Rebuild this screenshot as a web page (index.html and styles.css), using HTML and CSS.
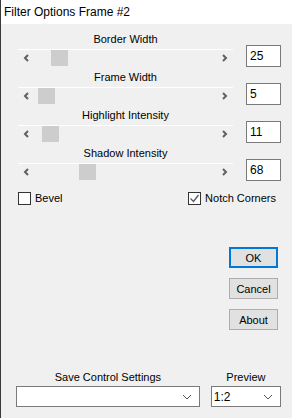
FILE: index.html
```html
<!DOCTYPE html>
<html lang="en">
<head>
    <meta charset="UTF-8">
    <meta name="viewport" content="width=device-width, initial-scale=1.0">
    <title>Filter Options Frame #2</title>
    <link rel="stylesheet" href="styles.css">
</head>
<body>

<div class="title">Filter Options Frame #2</div>

<div class="dialog">
    <div class="slider-row">
        <div class="slider">
            <div class="slider-label">Border Width</div>
            <div class="track">
                <span class="arrow"><svg width="16" height="16" viewBox="0 0 16 16"><path d="M10 5 L7 8 L10 11" fill="none" stroke="#606060" stroke-width="2"/></svg></span>
                <div class="thumb-area"><span class="thumb" style="margin-left: 17px"></span></div>
                <span class="arrow"><svg width="16" height="16" viewBox="0 0 16 16"><path d="M6 5 L9 8 L6 11" fill="none" stroke="#606060" stroke-width="2"/></svg></span>
            </div>
        </div>
        <div class="value">25</div>
    </div>

    <div class="slider-row">
        <div class="slider">
            <div class="slider-label">Frame Width</div>
            <div class="track">
                <span class="arrow"><svg width="16" height="16" viewBox="0 0 16 16"><path d="M10 5 L7 8 L10 11" fill="none" stroke="#606060" stroke-width="2"/></svg></span>
                <div class="thumb-area"><span class="thumb" style="margin-left: 4px"></span></div>
                <span class="arrow"><svg width="16" height="16" viewBox="0 0 16 16"><path d="M6 5 L9 8 L6 11" fill="none" stroke="#606060" stroke-width="2"/></svg></span>
            </div>
        </div>
        <div class="value">5</div>
    </div>

    <div class="slider-row">
        <div class="slider">
            <div class="slider-label">Highlight Intensity</div>
            <div class="track">
                <span class="arrow"><svg width="16" height="16" viewBox="0 0 16 16"><path d="M10 5 L7 8 L10 11" fill="none" stroke="#606060" stroke-width="2"/></svg></span>
                <div class="thumb-area"><span class="thumb" style="margin-left: 8px"></span></div>
                <span class="arrow"><svg width="16" height="16" viewBox="0 0 16 16"><path d="M6 5 L9 8 L6 11" fill="none" stroke="#606060" stroke-width="2"/></svg></span>
            </div>
        </div>
        <div class="value">11</div>
    </div>

    <div class="slider-row">
        <div class="slider">
            <div class="slider-label">Shadow Intensity</div>
            <div class="track">
                <span class="arrow"><svg width="16" height="16" viewBox="0 0 16 16"><path d="M10 5 L7 8 L10 11" fill="none" stroke="#606060" stroke-width="2"/></svg></span>
                <div class="thumb-area"><span class="thumb" style="margin-left: 45px"></span></div>
                <span class="arrow"><svg width="16" height="16" viewBox="0 0 16 16"><path d="M6 5 L9 8 L6 11" fill="none" stroke="#606060" stroke-width="2"/></svg></span>
            </div>
        </div>
        <div class="value">68</div>
    </div>

    <div class="checks">
        <label class="check">
            <span class="box"></span>
            <span>Bevel</span>
        </label>
        <label class="check">
            <span class="box"><svg width="11" height="11" viewBox="0 0 11 11"><path d="M1.5 5.5 L4.5 8.5 L9.5 2" fill="none" stroke="#5a5a5a" stroke-width="1.3"/></svg></span>
            <span>Notch Corners</span>
        </label>
    </div>

    <div class="buttons">
        <button class="default">OK</button>
        <button>Cancel</button>
        <button>About</button>
    </div>

    <div class="bottom">
        <div class="group save">
            <div class="group-label">Save Control Settings</div>
            <div class="combo">
                <span class="combo-text"></span>
                <svg width="10" height="6" viewBox="0 0 10 6"><path d="M1 1 L5 5 L9 1" fill="none" stroke="#555" stroke-width="1"/></svg>
            </div>
        </div>
        <div class="group preview">
            <div class="group-label">Preview</div>
            <div class="combo">
                <span class="combo-text">1:2</span>
                <svg width="10" height="6" viewBox="0 0 10 6"><path d="M1 1 L5 5 L9 1" fill="none" stroke="#555" stroke-width="1"/></svg>
            </div>
        </div>
    </div>
</div>

</body>
</html>
```

FILE: styles.css
```css
body {
    margin: 0;
    width: 291px;
    height: 418px;
    border-left: 1px solid #3a3a3a;
    background-color: #f0f0f0;
    font-family: "Liberation Sans", Arial, sans-serif;
    font-size: 11px;
    color: #000;
    overflow: hidden;
}

.title {
    height: 24px;
    line-height: 24px;
    padding-left: 3px;
    background: white;
    font-size: 12px;
}

.dialog {
    padding: 9px 11px 0 17px;
}

.slider-row {
    display: flex;
    gap: 13px;
    height: 33px;
    margin-bottom: 5px;
}

.slider {
    width: 215px;
}

.slider-label {
    height: 13px;
    line-height: 13px;
    margin-bottom: 3px;
    text-align: center;
}

.track {
    display: flex;
    height: 16px;
    border-top: 1px solid white;
}

.arrow {
    width: 16px;
    height: 16px;
}

.thumb-area {
    flex: 1;
}

.thumb {
    display: block;
    width: 17px;
    height: 16px;
    background-color: #cdcdcd;
}

.value {
    box-sizing: border-box;
    width: 35px;
    height: 22px;
    margin-top: 12px;
    padding-left: 3px;
    line-height: 20px;
    font-size: 12px;
    background: white;
    border: 1px solid #7a7a7a;
}

/* the 5px below the last slider collapses into this margin */
.checks {
    display: flex;
    justify-content: space-between;
    margin-top: 12px;
    padding-right: 5px;
    height: 13px;
}

.check {
    display: flex;
    align-items: center;
    gap: 4px;
    line-height: 13px;
}

.box {
    box-sizing: border-box;
    width: 13px;
    height: 13px;
    border: 1px solid #333;
    background: white;
    display: flex;
    align-items: center;
    justify-content: center;
}

.buttons {
    display: flex;
    flex-direction: column;
    align-items: flex-end;
    gap: 10px;
    margin-top: 42px;
    margin-right: 3px;
}

.buttons button {
    box-sizing: border-box;
    width: 49px;
    height: 21px;
    padding: 0;
    font-family: "Liberation Sans", Arial, sans-serif;
    font-size: 11px;
    color: #000;
    background-color: #e1e1e1;
    border: 1px solid #adadad;
}

.buttons button.default {
    border: 2px solid #0078d7;
}

.bottom {
    display: flex;
    gap: 11px;
    margin-top: 41px;
    margin-left: -2px;
}

.group-label {
    height: 13px;
    line-height: 13px;
    margin-bottom: 2px;
    text-align: center;
}

.save {
    width: 186px;
}

.preview {
    width: 71px;
}

.combo {
    box-sizing: border-box;
    height: 21px;
    display: flex;
    align-items: center;
    justify-content: space-between;
    padding: 0 7px 0 2px;
    background: white;
    border: 1px solid #7a7a7a;
    font-size: 12px;
}
```
